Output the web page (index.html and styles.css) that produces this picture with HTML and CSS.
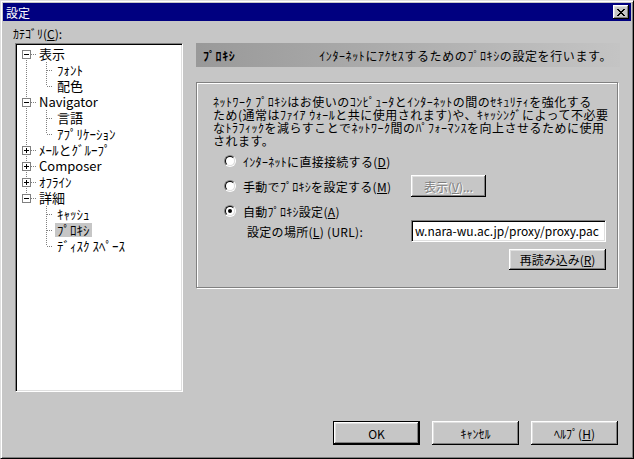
FILE: index.html
```html
<!DOCTYPE html>
<html lang="ja">
<head>
    <meta charset="UTF-8">
    <title>設定</title>
    <link rel="stylesheet" href="styles.css">
</head>
<body>
    <div class="window">
        <div class="title-bar">
            <span class="title">設定</span>
            <span class="close-btn">
                <svg width="8" height="7" shape-rendering="crispEdges"><path d="M0 0h2v1h-2z M6 0h2v1h-2z M1 1h2v1h-2z M5 1h2v1h-2z M2 2h4v1h-4z M3 3h2v1h-2z M2 4h4v1h-4z M1 5h2v1h-2z M5 5h2v1h-2z M0 6h2v1h-2z M6 6h2v1h-2z"/></svg>
            </span>
        </div>

        <div class="main">
            <div class="cat-label">ｶﾃｺﾞﾘ(<u>C</u>):</div>

            <div class="columns">
                <!-- category tree -->
                <div class="tree">
                    <div class="node first">
                        <div class="row">
                            <svg class="toggle" width="9" height="9" shape-rendering="crispEdges"><rect x="0.5" y="0.5" width="8" height="8" fill="#fff" stroke="#808080"/><path d="M2 4h5v1h-5z"/></svg>
                            <span class="dash"></span><span class="label">表示</span>
                        </div>
                        <div class="children">
                            <div class="row child"><span class="dash"></span><span class="label">ﾌｫﾝﾄ</span></div>
                            <div class="row child"><span class="dash"></span><span class="label">配色</span></div>
                        </div>
                    </div>
                    <div class="node">
                        <div class="row">
                            <svg class="toggle" width="9" height="9" shape-rendering="crispEdges"><rect x="0.5" y="0.5" width="8" height="8" fill="#fff" stroke="#808080"/><path d="M2 4h5v1h-5z"/></svg>
                            <span class="dash"></span><span class="label">Navigator</span>
                        </div>
                        <div class="children">
                            <div class="row child"><span class="dash"></span><span class="label">言語</span></div>
                            <div class="row child"><span class="dash"></span><span class="label">ｱﾌﾟﾘｹｰｼｮﾝ</span></div>
                        </div>
                    </div>
                    <div class="node">
                        <div class="row">
                            <svg class="toggle" width="9" height="9" shape-rendering="crispEdges"><rect x="0.5" y="0.5" width="8" height="8" fill="#fff" stroke="#808080"/><path d="M2 4h5v1h-5z M4 2h1v5h-1z"/></svg>
                            <span class="dash"></span><span class="label">ﾒｰﾙとｸﾞﾙｰﾌﾟ</span>
                        </div>
                    </div>
                    <div class="node">
                        <div class="row">
                            <svg class="toggle" width="9" height="9" shape-rendering="crispEdges"><rect x="0.5" y="0.5" width="8" height="8" fill="#fff" stroke="#808080"/><path d="M2 4h5v1h-5z M4 2h1v5h-1z"/></svg>
                            <span class="dash"></span><span class="label">Composer</span>
                        </div>
                    </div>
                    <div class="node">
                        <div class="row">
                            <svg class="toggle" width="9" height="9" shape-rendering="crispEdges"><rect x="0.5" y="0.5" width="8" height="8" fill="#fff" stroke="#808080"/><path d="M2 4h5v1h-5z M4 2h1v5h-1z"/></svg>
                            <span class="dash"></span><span class="label">ｵﾌﾗｲﾝ</span>
                        </div>
                    </div>
                    <div class="node last">
                        <div class="row">
                            <svg class="toggle" width="9" height="9" shape-rendering="crispEdges"><rect x="0.5" y="0.5" width="8" height="8" fill="#fff" stroke="#808080"/><path d="M2 4h5v1h-5z"/></svg>
                            <span class="dash"></span><span class="label">詳細</span>
                        </div>
                        <div class="children">
                            <div class="row child"><span class="dash"></span><span class="label">ｷｬｯｼｭ</span></div>
                            <div class="row child"><span class="dash"></span><span class="label selected">ﾌﾟﾛｷｼ</span></div>
                            <div class="row child"><span class="dash"></span><span class="label">ﾃﾞｨｽｸ ｽﾍﾟｰｽ</span></div>
                        </div>
                    </div>
                </div>

                <!-- settings panel -->
                <div class="panel">
                    <div class="panel-head">
                        <h3>ﾌﾟﾛｷｼ</h3>
                        <span>ｲﾝﾀｰﾈｯﾄにｱｸｾｽするためのﾌﾟﾛｷｼの設定を行います。</span>
                    </div>

                    <div class="group">
                        <p class="desc">ﾈｯﾄﾜｰｸ ﾌﾟﾛｷｼはお使いのｺﾝﾋﾟｭｰﾀとｲﾝﾀｰﾈｯﾄの間のｾｷｭﾘﾃｨを強化する<br>ため(通常はﾌｧｲｱ ｳｫｰﾙと共に使用されます)や、ｷｬｯｼﾝｸﾞによって不必要<br>なﾄﾗﾌｨｯｸを減らすことでﾈｯﾄﾜｰｸ間のﾊﾟﾌｫｰﾏﾝｽを向上させるために使用<br>されます。</p>

                        <div class="options">
                            <div class="opt-row r1">
                                <div class="opt-cell"><span class="radio"><span></span></span>ｲﾝﾀｰﾈｯﾄに直接接続する(<u>D</u>)</div>
                            </div>
                            <div class="opt-row r2">
                                <div class="opt-cell"><span class="radio"><span></span></span>手動でﾌﾟﾛｷｼを設定する(<u>M</u>)</div>
                                <button class="btn btn-view" disabled>表示(<u>V</u>)...</button>
                            </div>
                            <div class="opt-row r3">
                                <div class="opt-cell"><span class="radio checked"><span></span></span>自動ﾌﾟﾛｷｼ設定(<u>A</u>)</div>
                            </div>
                            <div class="opt-row r4">
                                <div class="opt-cell indent">設定の場所(<u>L</u>) (URL):</div>
                                <div class="field">w.nara-wu.ac.jp/proxy/proxy.pac</div>
                            </div>
                            <div class="opt-row r5">
                                <button class="btn btn-reload">再読み込み(<u>R</u>)</button>
                            </div>
                        </div>
                    </div>
                </div>
            </div>

            <div class="footer">
                <button class="btn btn-l default">OK</button>
                <button class="btn btn-l">ｷｬﾝｾﾙ</button>
                <button class="btn btn-l">ﾍﾙﾌﾟ(<u>H</u>)</button>
            </div>
        </div>
    </div>
</body>
</html>
```

FILE: styles.css
```css
* {
    margin: 0;
    padding: 0;
    box-sizing: border-box;
}

body {
    font-family: "Noto Sans CJK JP", "Liberation Sans", sans-serif;
    font-size: 12px;
    color: #000;
    background-color: #c6c6c6;
}

u {
    text-decoration: underline;
    text-underline-offset: 1px;
}


/* window frame */

.window {
    width: 634px;
    height: 459px;
    background-color: #c6c6c6;
    border: 1px solid;
    border-color: #dfdfdf #000 #000 #dfdfdf;
    box-shadow: inset 1px 1px #fff, inset -1px -1px #808080;
    padding: 2px;
    display: flex;
    flex-direction: column;
}

.title-bar {
    height: 18px;
    background-color: #000080;
    color: #fff;
    display: flex;
    align-items: center;
    justify-content: space-between;
    padding: 0 2px 0 3px;
}

.close-btn {
    width: 16px;
    height: 14px;
    background-color: #c6c6c6;
    box-shadow: inset -1px -1px #000, inset 1px 1px #fff, inset -2px -2px #808080, inset 2px 2px #dfdfdf;
    display: flex;
    align-items: center;
    justify-content: center;
    padding-right: 1px;
}

.main {
    flex: 1;
    padding: 6px 0 0 10px;
}

.cat-label {
    height: 13px;
    line-height: 13px;
    margin-bottom: 3px;
}

.columns {
    display: flex;
    gap: 13px;
    margin-left: 2px;
}


/* tree */

.tree {
    width: 168px;
    height: 349px;
    background-color: #fff;
    border: 1px solid;
    border-color: #808080 #fff #fff #808080;
    box-shadow: inset 1px 1px #000, inset -1px -1px #dfdfdf;
    padding: 2px 0 0 1px;
}

.node {
    background: repeating-linear-gradient(to bottom, #808080 0 1px, transparent 1px 2px) 9px 0 / 1px 100% no-repeat;
}

.node.first {
    background-position: 9px 8px;
}

.node.last {
    background-size: 1px 8px;
}

.children {
    background: repeating-linear-gradient(to bottom, #808080 0 1px, transparent 1px 2px) 29px 0 / 1px calc(100% - 8px) no-repeat;
}

.row {
    height: 16px;
    display: flex;
    align-items: center;
}

.toggle {
    margin-left: 5px;
    flex: none;
}

.dash {
    width: 6px;
    height: 1px;
    flex: none;
    background: repeating-linear-gradient(to right, #808080 0 1px, transparent 1px 2px);
}

.row.child {
    padding-left: 30px;
}

.row.child .label {
    margin-left: 2px;
}

.label {
    padding: 0 2px;
    font-size: 13px;
    line-height: 14px;
    white-space: nowrap;
}

.label.selected {
    background-color: #c6c6c6;
}


/* panel */

.panel {
    width: 424px;
    display: flex;
    flex-direction: column;
}

.panel-head {
    height: 24px;
    display: flex;
    align-items: center;
    justify-content: space-between;
    padding: 0 8px 0 7px;
    background: linear-gradient(to right, #999, #c4c4c4);
    white-space: nowrap;
    letter-spacing: .6px;
}

.panel-head h3 {
    font-size: 12px;
    font-weight: bold;
}

.group {
    width: 422px;
    height: 206px;
    margin-top: 15px;
    border: 1px solid #808080;
    box-shadow: inset 1px 1px #fff, 1px 1px #fff;
    padding: 12px 0 0 16px;
}

.desc {
    line-height: 13px;
    white-space: nowrap;
    letter-spacing: .5px;
}

.options {
    margin-top: 6px;
    margin-left: 11px;
}

.opt-row {
    display: flex;
    align-items: center;
}

.r1 { height: 16px; }
.r2 { height: 22px; margin-top: 6px; }
.r3 { height: 16px; margin-top: 6px; }
.r4 { height: 22px; margin-top: 1px; }
.r5 { height: 21px; margin-top: 7px; }

.opt-cell {
    width: 187px;
    display: flex;
    align-items: center;
    white-space: nowrap;
    letter-spacing: .3px;
}

.opt-cell.indent {
    padding-left: 23px;
}

.radio {
    width: 12px;
    height: 12px;
    margin-right: 7px;
    border-radius: 50%;
    border: 1px solid;
    border-color: #808080 #fff #fff #808080;
    flex: none;
}

.radio span {
    display: flex;
    align-items: center;
    justify-content: center;
    width: 10px;
    height: 10px;
    border-radius: 50%;
    border: 1px solid;
    border-color: #000 #dfdfdf #dfdfdf #000;
    background-color: #fff;
}

.radio.checked span::after {
    content: "";
    width: 4px;
    height: 4px;
    border-radius: 50%;
    background-color: #000;
}

.field {
    width: 195px;
    height: 22px;
    background-color: #fff;
    border: 1px solid;
    border-color: #808080 #fff #fff #808080;
    box-shadow: inset 1px 1px #000, inset -1px -1px #dfdfdf;
    padding-left: 3px;
    line-height: 20px;
    overflow: hidden;
    white-space: nowrap;
}


/* buttons */

.btn {
    font: inherit;
    color: #000;
    background-color: #c6c6c6;
    border: none;
    box-shadow: inset -1px -1px #000, inset 1px 1px #fff, inset -2px -2px #808080, inset 2px 2px #dfdfdf;
    display: flex;
    align-items: center;
    justify-content: center;
    white-space: nowrap;
}

.btn:disabled {
    color: #808080;
    text-shadow: 1px 1px #fff;
}

.btn-view {
    width: 75px;
    height: 22px;
}

.btn-reload {
    width: 97px;
    height: 21px;
    margin-left: 285px;
}

.btn-l {
    width: 87px;
    height: 24px;
}

.btn.default {
    border: 1px solid #000;
}

.footer {
    display: flex;
    justify-content: flex-end;
    gap: 12px;
    margin-top: 29px;
    padding-right: 13px;
}
```
